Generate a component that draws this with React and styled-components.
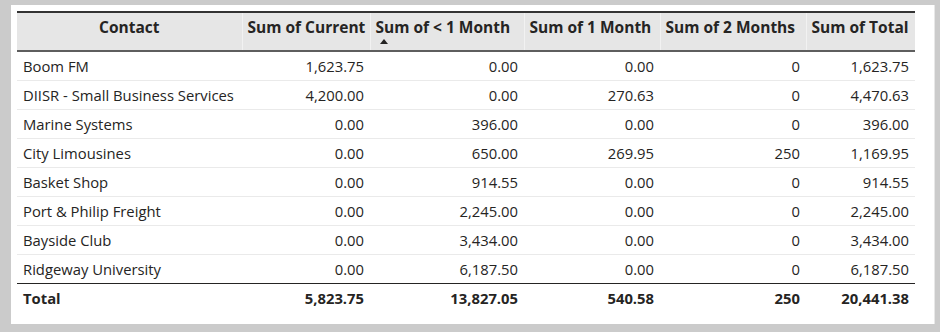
import React from 'react';
import styled, { createGlobalStyle } from 'styled-components';

const GlobalStyle = createGlobalStyle`
	body {
		margin: 0;
		background: #cbcbcb;
		font-family: "Open Sans", "Noto Sans", sans-serif;
	}
`

const Page = styled.div`
	width: 940px;
	height: 332px;
	padding: 5px 0 0 11px;
	box-sizing: border-box;
`

const Panel = styled.div`
	width: 924px;
	height: 319px;
	box-sizing: border-box;
	padding: 6px 0 0 6px;
	background: #ffffff;
	border-right: 1px solid #e8e8e8;
`

const Table = styled.table`
	border-collapse: collapse;
	table-layout: fixed;
	width: 898px;
	color: #252423;
	font-size: 14.8px;
`

const HeadCell = styled.th`
	height: 33px;
	padding: 4px 5px 0;
	vertical-align: top;
	background: #e6e6e6;
	border-top: 2px solid #333333;
	border-bottom: 2px solid #5e5e5e;
	border-left: 1px solid #f2f2f2;
	font-weight: 700;
	font-size: 15.5px;
	line-height: 21px;
	text-align: ${p => (p.$center ? 'center' : 'left')};
	white-space: nowrap;
	position: relative;
	&:first-child { border-left: none; }
`

const SortArrow = styled.span`
	position: absolute;
	left: 9px;
	bottom: 6px;
	width: 0;
	height: 0;
	border-left: 4px solid transparent;
	border-right: 4px solid transparent;
	border-bottom: 5px solid #252423;
`

const Row = styled.tr`
	border-bottom: 1px solid ${p => (p.$last ? '#252423' : '#eaeaea')};
`

const Cell = styled.td`
	height: 28px;
	padding: 0 6px;
	text-align: ${p => (p.$text ? 'left' : 'right')};
	white-space: nowrap;
`

const TotalCell = styled.td`
	height: 28px;
	padding: 0 6px;
	font-weight: 700;
	text-align: ${p => (p.$text ? 'left' : 'right')};
`

const widths = [225, 128, 154, 136, 146, 109];

const headers = ['Sum of Current', 'Sum of < 1 Month', 'Sum of 1 Month', 'Sum of 2 Months', 'Sum of Total'];

const rows = [
	['Boom FM', '1,623.75', '0.00', '0.00', '0', '1,623.75'],
	['DIISR - Small Business Services', '4,200.00', '0.00', '270.63', '0', '4,470.63'],
	['Marine Systems', '0.00', '396.00', '0.00', '0', '396.00'],
	['City Limousines', '0.00', '650.00', '269.95', '250', '1,169.95'],
	['Basket Shop', '0.00', '914.55', '0.00', '0', '914.55'],
	['Port & Philip Freight', '0.00', '2,245.00', '0.00', '0', '2,245.00'],
	['Bayside Club', '0.00', '3,434.00', '0.00', '0', '3,434.00'],
	['Ridgeway University', '0.00', '6,187.50', '0.00', '0', '6,187.50'],
];

const totals = ['Total', '5,823.75', '13,827.05', '540.58', '250', '20,441.38'];

export default function App() {
	return (
		<>
			<GlobalStyle />
			<Page>
				<Panel>
					<Table>
						<colgroup>
							{widths.map((w, i) => <col key={i} style={{ width: w }} />)}
						</colgroup>
						<thead>
							<tr>
								<HeadCell $center>Contact</HeadCell>
								{headers.map((h, i) => (
									<HeadCell key={h}>
										{h}
										{i === 1 && <SortArrow />}
									</HeadCell>
								))}
							</tr>
						</thead>
						<tbody>
							{rows.map((r, i) => (
								<Row key={r[0]} $last={i === rows.length - 1}>
									{r.map((v, j) => <Cell key={j} $text={j === 0}>{v}</Cell>)}
								</Row>
							))}
							<tr>
								{totals.map((v, j) => <TotalCell key={j} $text={j === 0}>{v}</TotalCell>)}
							</tr>
						</tbody>
					</Table>
				</Panel>
			</Page>
		</>
	)
}
